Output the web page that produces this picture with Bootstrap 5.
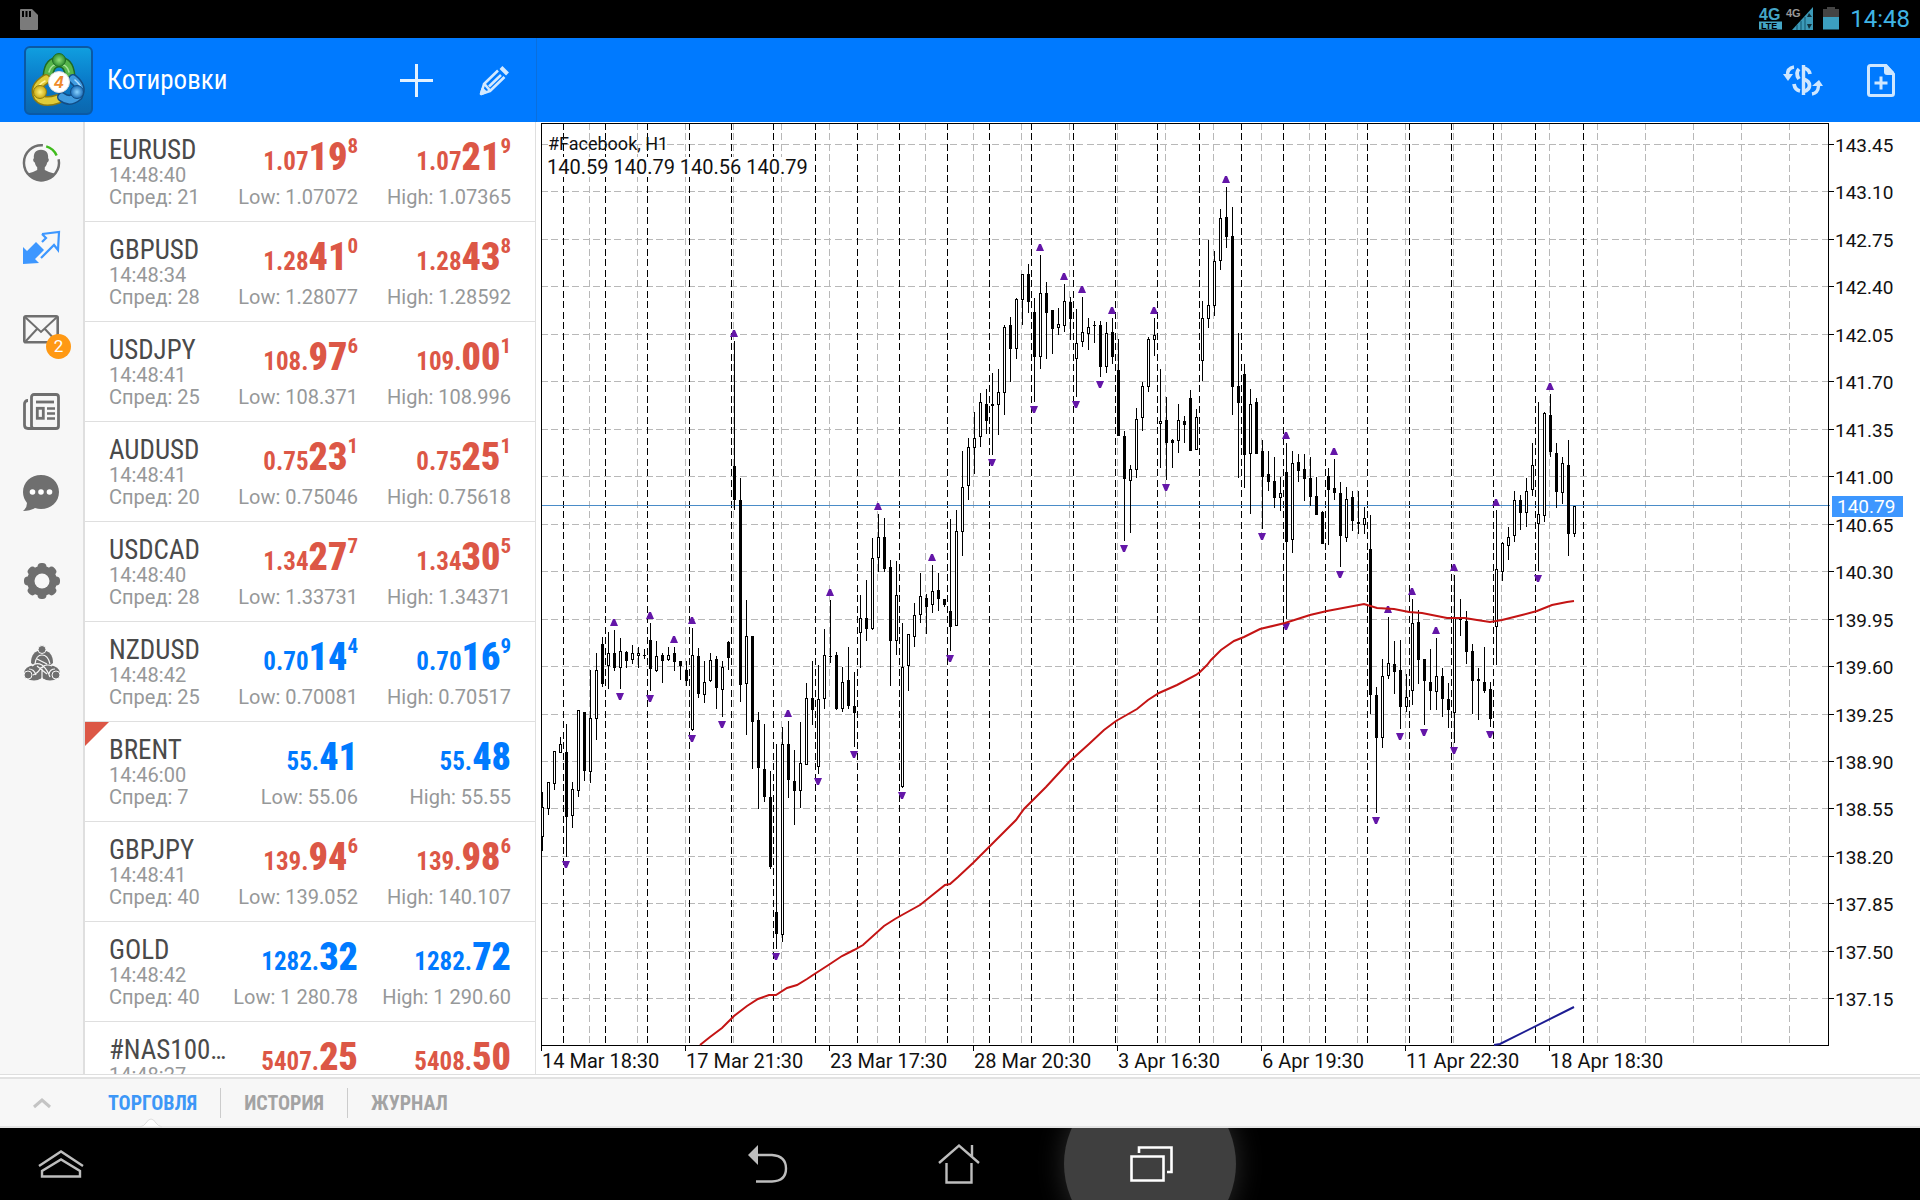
<!DOCTYPE html>
<html lang="ru">
<head>
<meta charset="utf-8">
<meta name="viewport" content="width=device-width, initial-scale=1">
<title>Котировки</title>
<link href="https://cdn.jsdelivr.net/npm/bootstrap@5.3.0/dist/css/bootstrap.min.css" rel="stylesheet">
<style>
:root{--blue:#007aff;--red:#dc5746;--ink:#4a4a4a;--soft:#969899;--rule:#dfdfdf;--panel:#f7f7f7;--cond:"Roboto Condensed","Liberation Sans Narrow",Roboto,sans-serif}
body{font-family:Roboto,sans-serif;background:#fff;overflow:hidden}
button{background:none;border:0;padding:0;display:flex;align-items:center;justify-content:center}
svg{display:block;overflow:visible}
.statusbar{height:38px;background:#000;color:#3fb4e5;padding:0 10px 0 20px}
.clock{font-size:24px;line-height:38px;margin-left:10px}
.topbar{height:84px;background:var(--blue)}
.topbar-left{width:537px;border-right:1px solid #0a6fdd;padding:0 26px 0 24px}
.topbar h1{font:400 27px/36px var(--cond);color:#fff;margin:0 0 0 14px}
.edit-btn{margin-left:46px}
.topbar-right{padding-right:25px;gap:44px}
.siderail{width:85px;background:var(--panel);border-right:2px solid var(--rule);padding-top:23px}
.siderail a{height:36px;margin-bottom:46px;width:36px;margin-left:23px;display:block;position:relative;color:#6f6f6f}
.siderail .rail-account{margin-bottom:48px}
.siderail .rail-chat{margin-bottom:52px}
.mailcount{position:absolute;left:23px;top:23px;width:25px;height:25px;border-radius:50%;background:#ff9914;color:#fff;font-size:17px;line-height:25px;text-align:center}
.quotes{width:451px;border-right:1px solid var(--rule)}
.quote{height:100px;border-bottom:1px solid var(--rule);padding:14px 24px 0;position:relative}
.quote.flagged::before{content:"";position:absolute;left:0;top:0;border-top:24px solid var(--red);border-right:24px solid transparent}
.sym{font:400 27px/28px var(--cond);color:var(--ink);white-space:nowrap}
.sym-col{width:0}
.info{font-size:20px;line-height:22px;color:var(--soft);white-space:nowrap}
.side{width:153px;text-align:right;white-space:nowrap}
.price{font:700 25px/42px var(--cond);height:50px;color:var(--red);white-space:nowrap}
.price.rise{color:var(--blue)}
.price b{font-size:38px;line-height:42px}
.price sup{font-size:21px;line-height:0;vertical-align:17px;top:0}
.chartpane{margin-left:1px;min-width:0}
#chart{width:100%;height:100%}
#chart text{font-size:19px;fill:#111}
#chart .wide-label{font-size:20px}
#chart .chart-title{font-size:18px}
#chart .tag-label{fill:#fff}
.workspace{min-height:0}
.bottombar{height:49px;background:var(--panel);border-bottom:2px solid #e4e4e4}
.bottombar-gap{height:5px;background:#fff;border-top:1px solid var(--rule);border-bottom:2px solid #e2e2e2}
.expander{width:84px;flex:none}
.journaltabs{font:700 20px/24px var(--cond);margin-left:24px}
.journaltabs a{color:#a3a3a3;text-decoration:none;padding:0 23px;border-left:1px solid #ccc;line-height:30px;position:relative}
.journaltabs a:first-child{border-left:0;color:#3d97f7;padding-left:0}
.notch{position:absolute;left:32px;bottom:-9px}
.sysnav{height:72px;background:#000;overflow:hidden}
.sysnav button{width:192px;height:72px;position:relative}
.sysnav .pressed::before{content:"";position:absolute;left:8px;top:-50px;width:172px;height:172px;border-radius:50%;background:#3f3f3f;box-shadow:0 0 28px #2c2c2c}
.sysnav .pressed svg{position:relative}
.sysnav .sysmenu{width:122px;position:absolute;left:0}
</style>
<script src="https://cdn.jsdelivr.net/npm/bootstrap@5.3.0/dist/js/bootstrap.bundle.min.js"></script>
</head>
<body>
<div class="d-flex flex-column vh-100">
  <div class="statusbar d-flex align-items-center flex-shrink-0">
    <svg width="18" height="21" viewBox="0 0 18 21"><path d="M1 0h11l6 6v14q0 1-1 1H1q-1 0-1-1V1q0-1 1-1z" fill="#7b7b7b"/><path d="M2 2h2v6H2zM5.500 2h2v6h-2zM9 2h2v6H9z" fill="#000"/></svg>
    <div class="d-flex align-items-center ms-auto">
      <svg width="82" height="26" viewBox="0 0 82 26">
        <text x="1" y="14" font-family="Liberation Sans" font-weight="700" font-size="16" fill="#45a6c6">4G</text>
        <path d="M1 15.500h23v8H1z" fill="#45a6c6"/><text x="3" y="23" font-family="Liberation Sans" font-weight="700" font-size="9" fill="#000">LTE</text>
        <path d="M55 1v23H34z" fill="#3c9ab8"/><path d="M39 19v5M43 15v9M47 11v13" stroke="#12556c" stroke-width="1"/><path d="M49 11l2-4 3 4zM49 18l2 5 3-5z" fill="#12323c"/>
        <text x="28" y="11" font-family="Liberation Sans" font-weight="700" font-size="11" fill="#999">4G</text>
        <path d="M65 3h4V1h8v2h4v8H65z" fill="#444"/><path d="M65 11h16v12.500H65z" fill="#3c9fc0"/>
      </svg>
      <span class="clock">14:48</span>
    </div>
  </div>

  <header class="topbar d-flex flex-shrink-0">
    <div class="topbar-left d-flex align-items-center">
      <svg width="69" height="69" viewBox="0 0 69 69">
        <defs>
          <linearGradient id="tile" x1="0" y1="0" x2="0" y2="1"><stop offset="0" stop-color="#109fe0"/><stop offset=".5" stop-color="#0a7bc9"/><stop offset="1" stop-color="#0b66ad"/></linearGradient>
          <radialGradient id="gr"><stop offset="0" stop-color="#8fe07a"/><stop offset="1" stop-color="#2c8c2f"/></radialGradient>
          <radialGradient id="ye"><stop offset="0" stop-color="#fdf27a"/><stop offset="1" stop-color="#c9a912"/></radialGradient>
          <radialGradient id="bl"><stop offset="0" stop-color="#8ad3ff"/><stop offset="1" stop-color="#1a6cb8"/></radialGradient>
        </defs>
        <rect x="1" y="1" width="67" height="67" rx="5" fill="url(#tile)" stroke="#0a59a5" stroke-width="2"/>
        <g stroke-linecap="round" fill="none">
          <path d="M24 30q1-14 11-14t11 14" stroke="#1f6b25" stroke-width="11"/><path d="M24 30q1-14 11-14t11 14" stroke="#56b54a" stroke-width="8"/>
          <path d="M34 53q-14 5-20-2-5-10 8-18" stroke="#8d7a10" stroke-width="10"/><path d="M34 53q-14 5-20-2-5-10 8-18" stroke="#e0cc38" stroke-width="7"/>
          <path d="M49 33q10 8 5 17-8 7-16 1" stroke="#124d86" stroke-width="10"/><path d="M49 33q10 8 5 17-8 7-16 1" stroke="#3f9be0" stroke-width="7"/>
          <path d="M25 26q2-8 10-8t10 8" stroke="#a8e49a" stroke-width="1.500"/><path d="M13 44q2-6 8-9" stroke="#fff6a0" stroke-width="1.500"/><path d="M51 34q7 6 6 10" stroke="#b3e0ff" stroke-width="1.500"/>
        </g>
        <circle cx="35" cy="14" r="6.500" fill="url(#gr)" stroke="#1f6b25"/><circle cx="16" cy="46" r="6.500" fill="url(#ye)" stroke="#8d7a10"/><circle cx="53" cy="46" r="6.500" fill="url(#bl)" stroke="#124d86"/>
        <circle cx="35" cy="36" r="10.500" fill="#fff" stroke="#ddd"/>
        <text x="35" y="42" text-anchor="middle" font-family="Liberation Sans" font-style="italic" font-weight="700" font-size="17" fill="#ef8a2b">4</text>
      </svg>
      <h1>Котировки</h1>
      <button class="ms-auto" aria-label="Добавить"><svg width="33" height="33" viewBox="0 0 33 33"><path d="M16.500 0v33M0 16.500h33" stroke="#e2f1ff" stroke-width="3"/></svg></button>
      <button class="edit-btn" aria-label="Изменить"><svg width="31" height="31" viewBox="0 0 31 31" fill="none" stroke="#d3e9ff" stroke-width="2.600" stroke-linejoin="round"><path d="M2 29l3-10L19 5.500M2 29l9-3L25.500 12M5.500 19l5.500 6.500M10 21.500L22 10"/><path d="M22 2.500l6.500 6.500" stroke-width="4"/><path d="M2 29l1.500-5 3 3z" fill="#d3e9ff"/></svg></button>
    </div>
    <div class="topbar-right d-flex align-items-center ms-auto">
      <button aria-label="Торговля"><svg width="40" height="33" viewBox="0 0 40 33" fill="none" stroke="#cfe7ff" stroke-width="3.800"><path d="M20.500 1v30" stroke-width="3.400"/><path d="M27 10q-1-5-6.500-6M16 5q-4 4 0 10M20.500 15q6 2 6 6.500t-6 6M11 20q1 6 6 7"/><path d="M11 3q-7 1-6.500 9" stroke-width="3.400"/><path d="M0 10h10l-5 7z" fill="#cfe7ff" stroke="none"/><path d="M29 30q6-1 6.500-8" stroke-width="3.400"/><path d="M29 22h11l-4-6z" fill="#cfe7ff" stroke="none"/></svg></button>
      <button aria-label="Новый ордер"><svg width="28" height="33" viewBox="0 0 28 33"><path d="M3.500 1.500H19L26.500 10v19.500q0 2-2 2h-21q-2 0-2-2v-26q0-2 2-2z" fill="none" stroke="#cfe7ff" stroke-width="3"/><path d="M17 1h3l7 7v3h-7q-3 0-3-3z" fill="#cfe7ff"/><path d="M14 12.500v13M7.500 19h13" stroke="#cfe7ff" stroke-width="3"/></svg></button>
    </div>
  </header>

  <main class="workspace d-flex flex-grow-1">
    <nav class="siderail flex-shrink-0">
      <a href="#" class="rail-account" aria-label="Счёт"><svg width="36" height="36" viewBox="2 1 38 38"><path d="M23 1.300A18.500 18.500 0 1 0 39.600 16" fill="none" stroke="#6f6f6f" stroke-width="2.600"/><path d="M26.500 2.500a18 18 0 0 1 11 9.500" fill="none" stroke="#3fbb1c" stroke-width="2.600"/><path d="M21 6c6 0 8 4 7.500 9 1.500 1 .500 4-1 4.500-.500 3-1.500 4-2.500 5v3q5 3 10 3.500-5 8-14 8.500-9-.500-14-8.500 5-.500 10-3.500v-3c-1-1-2-2-2.500-5-1.500-.500-2.500-3.500-1-4.500C13 10 15 6 21 6z" fill="#6f6f6f"/></svg></a>
      <a href="#" aria-label="Котировки"><svg width="37" height="36" viewBox="0 -2 37 36"><path d="M0 16l4 4 9-9 8 8-9 9 4 4-16 1z" fill="#3d97ff"/><path d="M19 3l17-2-1 18-4-5-13 13M19 3l4 4-4 4" fill="none" stroke="#3d97ff" stroke-width="2.200"/></svg></a>
      <a href="#" aria-label="Почта"><svg width="36" height="36" viewBox="0 0 36 36" fill="none" stroke="#6f6f6f" stroke-width="2.600"><rect x="1.300" y="5.300" width="33.400" height="26" rx="1.500"/><path d="M2 6l16 15L34 6M2 31l12-13M34 31L22 18" stroke-width="2"/></svg><span class="mailcount">2</span></a>
      <a href="#" aria-label="Новости"><svg width="37" height="37" viewBox="0 0 37 37" fill="none" stroke="#6f6f6f" stroke-width="2.800"><rect x="8.500" y="1.500" width="27" height="34" rx="2.500"/><path d="M5 7.500q-3.500 0-3.500 3.500v21q0 3.500 3.500 3.500h8"/><path d="M13 9h18"/><rect x="14.300" y="15.300" width="6" height="10"/><path d="M24 15.500h8M24 20.500h8M24 25.500h8" stroke-width="2.500"/></svg></a>
      <a href="#" class="rail-chat" aria-label="Чат"><svg width="36" height="36" viewBox="0 0 36 36"><path d="M18 0c10 0 18 7 18 17s-8 17-18 17q-3 0-6-1-5 3-12 3 4-3 4-8-4-5-4-11C0 7 8 0 18 0z" fill="#6f6f6f"/><g fill="#fff"><circle cx="9.500" cy="17" r="2.800"/><circle cx="18" cy="17" r="2.800"/><circle cx="26.500" cy="17" r="2.800"/></g></svg></a>
      <a href="#" aria-label="Настройки"><svg width="38" height="36" viewBox="-19 -18 38 36"><g fill="#6f6f6f"><circle r="15"/><rect x="-4.500" y="-18" width="9" height="36" rx="4"/><rect x="-4.500" y="-18" width="9" height="36" rx="4" transform="rotate(45)"/><rect x="-4.500" y="-18" width="9" height="36" rx="4" transform="rotate(90)"/><rect x="-4.500" y="-18" width="9" height="36" rx="4" transform="rotate(135)"/></g><circle r="7.500" fill="#f7f7f7"/></svg></a>
      <a href="#" aria-label="О программе"><svg width="38" height="36" viewBox="0 0 38 36"><g fill="#6f6f6f"><path d="M8 18q0-12 11-13 11 1 11 13l-5 4H13z"/><ellipse cx="11" cy="28" rx="10" ry="7.500"/><ellipse cx="27" cy="28" rx="10" ry="7.500"/></g><g fill="none" stroke="#f7f7f7" stroke-width="1.200"><path d="M12 19q1-9 7-9t8 9M14 14l10 5M9 21q4-4 10-1 5 4 8 12M29 21q-7-3-12 3-2 4-7 6M19 24v11M14 21l10 8M6 24q5 0 7 6M32 24q-5 0-6 5"/></g><circle cx="19" cy="4.500" r="4" fill="#6f6f6f" stroke="#f7f7f7"/><circle cx="5" cy="30" r="4" fill="#6f6f6f" stroke="#f7f7f7"/><circle cx="33" cy="30" r="4" fill="#6f6f6f" stroke="#f7f7f7"/></svg></a>
    </nav>

    <section class="quotes flex-shrink-0 overflow-hidden" id="quotes" aria-label="Котировки"></section>

    <section class="chartpane flex-grow-1" aria-label="График"><svg id="chart" role="img" aria-label="#Facebook, H1"></svg></section>
  </main>

  <div class="bottombar-gap flex-shrink-0"></div>
  <footer class="bottombar d-flex align-items-center flex-shrink-0">
    <button class="expander" aria-label="Развернуть"><svg width="18" height="10" viewBox="0 0 18 10"><path d="M1 9l8-7 8 7" fill="none" stroke="#c4c4c4" stroke-width="3"/></svg></button>
    <nav class="journaltabs d-flex">
      <a href="#">ТОРГОВЛЯ<svg class="notch" width="22" height="9" viewBox="0 0 22 9"><path d="M0 9q4-1 6-4 5-8 10 0 2 3 6 4z" fill="#fff" stroke="#ddd"/></svg></a><a href="#">ИСТОРИЯ</a><a href="#">ЖУРНАЛ</a>
    </nav>
  </footer>

  <nav class="sysnav d-flex justify-content-center flex-shrink-0 position-relative">
    <button class="sysmenu" aria-label="Меню"><svg width="46" height="28" viewBox="0 0 46 28" fill="none" stroke="#bdbdbd" stroke-width="2.400"><path d="M1 16L23 1.500 45 16M4 26.500V21L23 9.500 42 21v5.500z"/></svg></button>
    <button aria-label="Назад"><svg width="40" height="38" viewBox="0 0 40 38"><path d="M8 10h16q14 1 14 13.500T24 36.500H8" fill="none" stroke="#bdbdbd" stroke-width="2.400"/><path d="M0 10l10-10v20z" fill="#bdbdbd"/></svg></button>
    <button aria-label="Домой"><svg width="42" height="40" viewBox="1 0 42 40" fill="none" stroke="#bdbdbd" stroke-width="2.400"><path d="M1 19L21 1.500 41 19M34 1v12M8.500 19v19.500h25V19"/></svg></button>
    <button class="pressed" aria-label="Недавние"><svg width="43" height="36" viewBox="1 0 43 36" fill="none" stroke="#fff" stroke-width="2.600"><path d="M1.500 10.500h32v24h-32zM9 7V1.500h32.500V26H37"/></svg></button>
  </nav>
</div>

<script>
const quotes = [
  ['EURUSD','14:48:40',21,'1.07','19','8','1.07072','1.07','21','9','1.07365',0],
  ['GBPUSD','14:48:34',28,'1.28','41','0','1.28077','1.28','43','8','1.28592',0],
  ['USDJPY','14:48:41',25,'108.','97','6','108.371','109.','00','1','108.996',0],
  ['AUDUSD','14:48:41',20,'0.75','23','1','0.75046','0.75','25','1','0.75618',0],
  ['USDCAD','14:48:40',28,'1.34','27','7','1.33731','1.34','30','5','1.34371',0],
  ['NZDUSD','14:48:42',25,'0.70','14','4','0.70081','0.70','16','9','0.70517',1],
  ['BRENT','14:46:00',7,'55.','41','','55.06','55.','48','','55.55',1],
  ['GBPJPY','14:48:41',40,'139.','94','6','139.052','139.','98','6','140.107',0],
  ['GOLD','14:48:42',40,'1282.','32','','1 280.78','1282.','72','','1 290.60',1],
  ['#NAS100…','14:48:27','','5407.','25','','','5408.','50','','',0]
];
const price = (a, b, c, up) => `<div class="price${up ? ' rise' : ''}">${a}<b>${b}</b>${c ? `<sup>${c}</sup>` : ''}</div>`;
document.getElementById('quotes').innerHTML = quotes.map(q => `
  <article class="quote d-flex${q[0] === 'BRENT' ? ' flagged' : ''}">
    <div class="sym-col flex-grow-1"><div class="sym">${q[0]}</div><div class="info">${q[1]}</div>${q[6] ? `<div class="info">Спред: ${q[2]}</div>` : ''}</div>
    <div class="side">${price(q[3], q[4], q[5], q[11])}${q[6] ? `<div class="info">Low: ${q[6]}</div>` : ''}</div>
    <div class="side">${price(q[7], q[8], q[9], q[11])}${q[6] ? `<div class="info">High: ${q[10]}</div>` : ''}</div>
  </article>`).join('');

/* Bars: high, body top, body bottom, low in thirds of a pixel below each block's base; 1 = falling bar */
const blocks = [
 [1314, `697 742 829 872 0,667 668 745 764 0,574 574 671 689 0,531 553 578 580 0,492 577 770 890 1,667 688 767 803 0,451 451 692 710 0,457 457 632 662 1,331 475 634 668 0,279 331 475 539 0,231 252 371 380 1,216 279 318 386 0,210 279 323 332 1,234 273 322 386 0,273 277 302 323 1,255 279 299 311 0,262 280 287 323 0,267 286 287 297 1,189 240 326 392 1,243 289 332 335 0,279 286 302 368 1,262 285 299 302 0,262 279 305 332 1,303 304 318 359 1,303 331 362 377 1,204 286 509 512 0,264 289 401 413 1,303 367 404 428 0,279 300 362 367 0,289 297 383 446 1,303 321 389 470 0,243 246 293 329 1,-657 -282 -181 -151 1,-245 -180 374 425 1,120 229 371 524 0,229 229 486 626 1,457 480 623 746 1,492 628 710 725 1,633 711 920 926 1,552 1057 1121 1166 1,501 552 1124 1145 0,484 552 659 713 1,571 663 692 794 1,486 609 692 743 0,369 415 613 614 0,303 414 449 495 1,316 418 620 643 0,207 286 416 446 0,121 289 291 308 1,276 285 446 449 1,321 367 446 455 0,261 361 437 446 1,337 438 458 560 1,105 175 218 323 0,60 175 206 242 1,-65 -5 206 209 0,-137 -68 -7 36 0,-125 -69 26 36 1,1 21 242 377 1,4 106 241 284 0,189 322 680 683 0,223 223 317 392 0,129 166 230 261 0,39 109 164 188 0,102 114 140 221 1,15 94 134 158 0,39 90 116 152 1,117 117 134 140 1,-122 153 200 272 1,-149 -86 196 197 0`],
 [114, `873 982 1115 1187 0,834 862 977 1019 0,756 835 862 941 0,699 727 829 860 0,687 732 782 822 1,639 733 737 884 1,627 697 734 824 0,495 502 698 765 0,471 495 566 665 1,414 418 566 597 0,342 343 418 494 0,312 342 425 459 1,415 457 590 725 1,285 400 590 626 0,366 399 458 597 1,450 450 506 581 1,444 493 503 525 0,373 424 497 515 0,411 426 476 540 1,447 550 596 711 0,411 517 545 560 0,474 502 521 570 0,483 495 497 548 1,483 495 620 650 1,486 520 620 638 0,474 516 590 611 1,537 630 827 827 1,813 828 956 1142 1,915 928 962 1118 0,744 778 929 953 0,666 679 773 812 0,532 538 680 695 0,474 526 539 587 0,627 784 791 923 0,711 780 848 959 1,837 840 848 923 1,732 781 842 878 0,768 783 794 848 1,690 714 872 872 1,747 772 868 869 0,423 475 602 662 0,240 436 476 503 0,273 304 437 467 0,147 175 302 329 0,81 171 230 264 1,141 228 680 765 1,519 678 728 953 1,612 642 884 983 1,687 733 881 1061 0,714 727 881 881 1,840 873 950 1106 1,873 942 965 992 1,891 963 1013 1043 1,951 1000 1013 1052 0,849 937 1145 1376 1,873 910 1139 1178 0,882 906 932 965 1,882 927 956 1022 1,891 954 1010 1037 1,951 1008 1064 1064 1,1053 1056 1151 1151 1,924 948 990 1155 1,897 984 998 1019 1,966 999 1127 1220 1,981 1018 1133 1145 0,993 1011 1082 1112 1,993 1087 1090 1121 1,1041 1075 1094 1121 0`],
 [834, `345 447 884 941 1,861 885 1013 1238 1,777 829 1013 1043 0,651 790 827 836 0,723 792 815 881 1,720 810 920 986 1,822 892 920 935 0,597 670 872 914 0,630 666 779 851 1,777 777 842 974 1,747 846 872 929 1,714 829 875 929 0,804 828 896 950 1,849 897 929 983 1,525 655 937 1028 0,597 656 658 707 1,633 663 755 791 1,732 753 842 941 1,804 837 842 959 1,741 846 872 878 1,846 867 956 980 1,330 508 680 794 0,426 430 515 543 0,381 412 437 479 0,273 301 407 425 0,285 300 338 389 1,234 274 338 380 0,129 196 269 288 0,6 343 371 513 0,36 40 347 365 0,-17 45 155 170 1,129 159 275 323 1,171 190 278 311 0,120 195 401 467 1,318 319 401 410 0`]
];
const bars = blocks.flatMap(([base, rows]) => rows.split(',').map(r => {
  const v = r.trim().split(' ').map(Number);
  return { h: Math.round((base + v[0]) / 3), t: Math.floor((base + v[1]) / 3), b: Math.ceil((base + v[2]) / 3), l: Math.round((base + v[3]) / 3), down: v[4] };
}));
const ups = [12,18,22,25,32,41,48,56,65,83,87,90,95,102,114,124,132,141,145,149,152,159,168];
const downs = [4,13,18,25,30,39,46,52,60,68,75,82,89,93,97,104,120,124,133,139,143,147,152,158,166];
const average = [[163,923],[173,915],[185,906],[197,894],[210,884],[221,877],[232,873],[239,873],[250,866],[260,863],[270,857],[276,853],[293,842],[305,834],[317,828],[326,823],[347,804],[358,797],[365,793],[383,783],[408,763],[413,762],[421,755],[436,741],[453,724],[479,698],[487,687],[509,665],[532,640],[552,622],[567,608],[579,599],[600,587],[611,578],[622,571],[640,563],[659,553],[663,550],[670,543],[674,538],[684,528],[697,519],[707,515],[723,507],[748,501],[773,493],[790,489],[827,482],[840,486],[857,487],[872,490],[885,491],[900,494],[910,496],[928,496],[940,498],[953,500],[965,498],[985,493],[1000,489],[1015,483],[1030,480],[1037,479]];
const trend = [[957,923],[963,922],[1037,885]];
const days = [26,68,110,152,194,236,278,320,362,410,452,494,536,578,620,662,704,746,788,830,872,914,956,998,1046];
const dates = ['14 Mar 18:30','17 Mar 21:30','23 Mar 17:30','28 Mar 20:30','3 Apr 16:30','6 Apr 19:30','11 Apr 22:30','18 Apr 18:30'];

function draw() {
  const svg = document.getElementById('chart'), W = svg.clientWidth;
  const L = 4, T = 1, R = W - 92, B = 923;
  let grid = '', day = '', ticks = '', labels = '', wick = '', body = '', hollow = '', marks = '';
  for (let x = L + 48; x < R; x += 48) grid += `M${x + .5} ${T}V${B}`;
  for (let k = 0; k < 19; k++) {
    const y = 22 + Math.round(k * 47.46);
    grid += `M${L} ${y + .5}H${R}`;
    ticks += `M${R} ${y + .5}h6`;
    labels += `<text x="${R + 7}" y="${y + 8}">${(143.45 - k * .35).toFixed(2)}</text>`;
  }
  days.forEach(x => day += `M${x + .5} ${T}V${B}`);
  dates.forEach((d, i) => { const x = L + i * 144; ticks += `M${x + .5} ${B}v6`; labels += `<text class="wide-label" x="${x + 1}" y="946">${d}</text>`; });
  bars.forEach((c, i) => {
    const x = 5 + i * 6;
    wick += `M${x} ${c.h}h1V${c.l}h-1z`;
    body += `M${x - 1} ${c.t}h3V${c.b}h-3z`;
    if (!c.down) hollow += `M${x} ${c.t + 1}h1V${c.b - 1}h-1z`;
  });
  ups.forEach(i => { const x = 5 + i * 6, y = bars[i].h - 11; marks += `M${x - 4} ${y + 7}L${x - 1} ${y}h2L${x + 4} ${y + 7}z`; });
  downs.forEach(i => { const x = 5 + i * 6, y = bars[i].l + 4; marks += `M${x - 4} ${y}h8L${x + 1} ${y + 7}h-2z`; });
  svg.innerHTML = `
    <g shape-rendering="crispEdges" fill="none">
      <path d="${grid}" stroke="#b8b8b8" stroke-dasharray="7 3 7 4"/>
      <path d="${day}" stroke="#000" stroke-dasharray="7 3 7 4"/>
      <path d="M${L} 383.5H${R + 2}" stroke="#4a8cc8"/>
      <path d="${wick}${body}" fill="#000"/><path d="${hollow}" fill="#fff"/>
      <path d="M${L + .5} ${B + .5}V${T + .5}H${R + 1}M${R + .5} ${T}V${B + 1}M${L} ${B + .5}H${R + 1}${ticks}" stroke="#000"/>
    </g>
    <path d="${marks}" fill="#6416a8"/>
    <polyline points="${average.join(' ')}" fill="none" stroke="#c41414" stroke-width="2"/>
    <polyline points="${trend.join(' ')}" fill="none" stroke="#1c1c92" stroke-width="2"/>
    <g>${labels}
    <text class="chart-title" x="11" y="28">#Facebook, H1</text><rect x="11" y="35" width="260" height="20" fill="#fff"/><text class="wide-label" x="10" y="52">140.59 140.79 140.56 140.79</text></g>
    <rect x="${R + 4}" y="374" width="71" height="21" fill="#3d97ff"/><text class="tag-label" x="${R + 9}" y="391">140.79</text>`;
}
draw();
addEventListener('resize', draw);
</script>
</body>
</html>
